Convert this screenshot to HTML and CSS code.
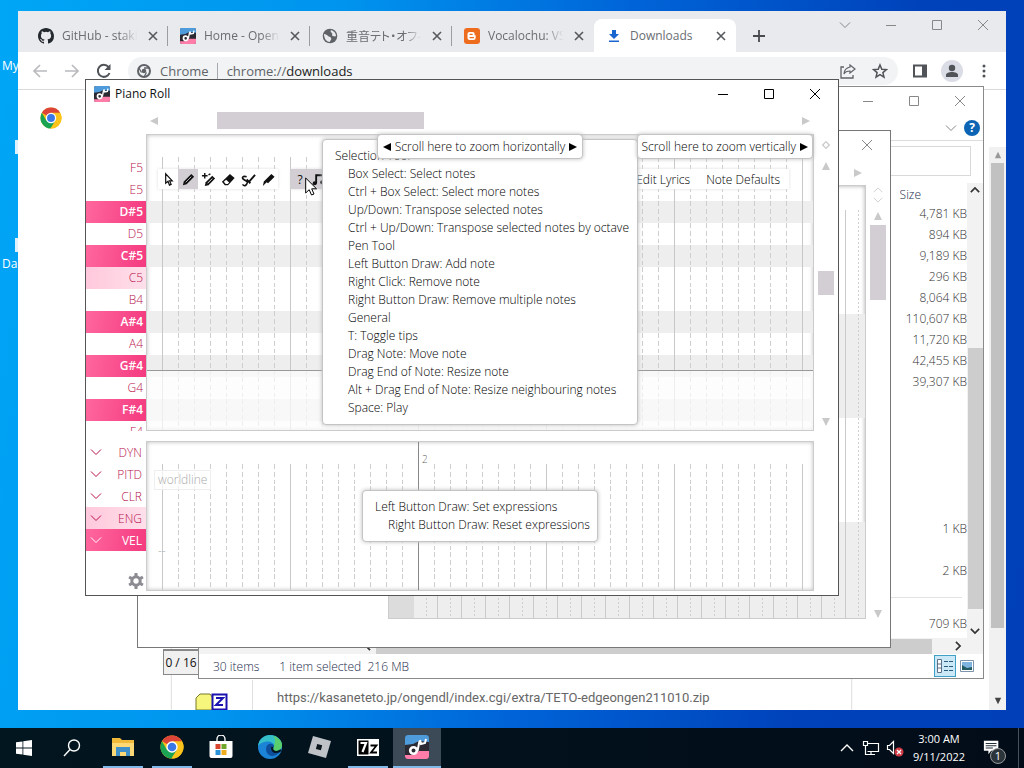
FILE: index.html
```html
<!DOCTYPE html>
<html lang="en">
<head>
    <meta charset="UTF-8">
    <meta name="viewport" content="width=device-width, initial-scale=1">
    <title>Desktop</title>
    <link rel="stylesheet" href="styles.css">
</head>
<body>
    <!-- Shared icons -->
    <svg class="sprite" aria-hidden="true">
        <symbol id="i-min" viewBox="0 0 12 12"><path d="M1 6.5h10" fill="none" stroke="currentColor"/></symbol>
        <symbol id="i-max" viewBox="0 0 12 12"><path d="M1.5 1.5h9v9h-9z" fill="none" stroke="currentColor"/></symbol>
        <symbol id="i-close" viewBox="0 0 12 12"><path d="M1 1l10 10M11 1L1 11" fill="none" stroke="currentColor"/></symbol>
        <symbol id="i-x" viewBox="0 0 12 12"><path d="M2 2l8 8M10 2l-8 8" fill="none" stroke="currentColor" stroke-width="1.6"/></symbol>
        <symbol id="i-down" viewBox="0 0 12 12"><path d="M1 3.5l5 5 5-5" fill="none" stroke="currentColor"/></symbol>
        <symbol id="i-up" viewBox="0 0 12 12"><path d="M1 8.5l5-5 5 5" fill="none" stroke="currentColor"/></symbol>
        <symbol id="i-tri" viewBox="0 0 10 10"><path d="M1 9h8L5 1z" fill="currentColor"/></symbol>
        <symbol id="i-utau" viewBox="0 0 24 24">
            <rect width="24" height="24" rx="3" fill="#2b2a33"/>
            <path d="M3 0h18a3 3 0 0 1 3 3v4L14 6l-6 3-8 1V3a3 3 0 0 1 3-3z" fill="#4e9bdb"/>
            <path d="M0 20l8 0 6-4 10 0v5a3 3 0 0 1-3 3H3a3 3 0 0 1-3-3z" fill="#ff7da8"/>
            <circle cx="8.500" cy="15.500" r="3.300" fill="none" stroke="#fff" stroke-width="2.600"/>
            <path d="M12.500 16l2-10M15 5l1 4 4-1 1-4" fill="none" stroke="#fff" stroke-width="2"/>
        </symbol>
        <symbol id="i-chrome" viewBox="0 0 24 24">
            <circle cx="12" cy="12" r="11.500" fill="#fbc116"/>
            <path d="M12 12L2 6.300A11.500 11.500 0 0 1 22 6.300z" fill="#db4437"/>
            <path d="M12 12L7 14.900 2 6.300a11.500 11.500 0 0 0 9.400 17.200L17 14.900z" fill="#1ba354"/>
            <path d="M12 6.300h10a11.500 11.500 0 0 1-10.500 17.200l5.500-8.700z" fill="#fcc31b"/>
            <circle cx="12" cy="12" r="5.700" fill="#fff"/>
            <circle cx="12" cy="12" r="4.300" fill="#3b78e7"/>
        </symbol>
    </svg>

    <main class="desktop">
        <div class="shortcut shortcut-my">My</div>
        <div class="shortcut shortcut-da">Da</div>

        <!-- Chrome -->
        <section class="window chrome">
            <div class="tabstrip">
                <div class="tab">
                    <svg class="favicon" viewBox="0 0 16 16"><path fill="#24292f" d="M8 0C3.580 0 0 3.580 0 8c0 3.540 2.290 6.530 5.470 7.590.4.070.55-.17.55-.38 0-.19-.01-.82-.01-1.490-2.010.37-2.530-.49-2.690-.94-.09-.23-.48-.94-.82-1.130-.28-.15-.68-.52-.01-.53.63-.01 1.080.58 1.230.82.72 1.210 1.870.87 2.330.66.07-.52.28-.87.51-1.070-1.780-.2-3.640-.89-3.640-3.950 0-.87.31-1.590.82-2.150-.08-.2-.36-1.020.08-2.120 0 0 .67-.21 2.200.82a7.600 7.600 0 0 1 4 0c1.530-1.040 2.200-.82 2.200-.82.44 1.100.16 1.920.08 2.120.51.56.82 1.270.82 2.150 0 3.070-1.870 3.750-3.650 3.950.29.25.54.73.54 1.480 0 1.070-.01 1.930-.01 2.200 0 .21.15.46.55.38A8.010 8.010 0 0 0 16 8c0-4.420-3.580-8-8-8z"/></svg>
                    <span class="tab-title">GitHub - staki</span>
                    <button class="tab-close" aria-label="Close tab"><svg><use href="#i-x"/></svg></button>
                </div>
                <div class="tab">
                    <svg class="favicon"><use href="#i-utau"/></svg>
                    <span class="tab-title">Home - OpenU</span>
                    <button class="tab-close" aria-label="Close tab"><svg><use href="#i-x"/></svg></button>
                </div>
                <div class="tab">
                    <svg class="favicon" viewBox="0 0 16 16"><circle cx="8" cy="8" r="7.300" fill="#5f6368"/><path d="M2 6c2 0 3 1 4 2s2 0 3 2-1 2-1 4c-3 0-6-3-6-8zM9 2c-1 2 0 2 1 3s-1 2 1 3 3 0 3 0c0-3-2-5-5-6z" fill="#e8eaed"/></svg>
                    <span class="tab-title">重音テト・オフィ</span>
                    <button class="tab-close" aria-label="Close tab"><svg><use href="#i-x"/></svg></button>
                </div>
                <div class="tab">
                    <svg class="favicon" viewBox="0 0 16 16"><rect width="16" height="16" rx="3" fill="#ee6c1d"/><path d="M5.500 4h3a2 2 0 0 1 2 2.300c0 .7.400 1 1.200 1v2.400a2.300 2.300 0 0 1-2.300 2.300H5.500A2 2 0 0 1 3.500 10V6a2 2 0 0 1 2-2z" fill="#fff"/><path d="M6 6.300h2.200M6 9.700h3.500" stroke="#ee6c1d" stroke-width="1.200" stroke-linecap="round"/></svg>
                    <span class="tab-title">Vocalochu: VS</span>
                    <button class="tab-close" aria-label="Close tab"><svg><use href="#i-x"/></svg></button>
                </div>
                <div class="tab tab-active">
                    <svg class="favicon" viewBox="0 0 16 16"><path d="M6 2h4v4h3l-5 5-5-5h3zM3 12.500h10V14H3z" fill="#1a66d0"/></svg>
                    <span class="tab-title">Downloads</span>
                    <button class="tab-close" aria-label="Close tab"><svg><use href="#i-x"/></svg></button>
                </div>
                <button class="new-tab" aria-label="New tab"><svg viewBox="0 0 12 12"><path d="M6 0v12M0 6h12" stroke="#474a4e" stroke-width="1.800"/></svg></button>
                <div class="caption caption-chrome">
                    <button aria-label="Search tabs"><svg><use href="#i-down"/></svg></button>
                    <button aria-label="Minimize"><svg><use href="#i-min"/></svg></button>
                    <button aria-label="Maximize"><svg><use href="#i-max"/></svg></button>
                    <button aria-label="Close"><svg><use href="#i-close"/></svg></button>
                </div>
            </div>
            <div class="toolbar">
                <button class="nav-btn" aria-label="Back"><svg viewBox="0 0 16 16"><path d="M15 8H2M8 2L2 8l6 6" fill="none" stroke="#b9bbbe" stroke-width="1.700"/></svg></button>
                <button class="nav-btn" aria-label="Forward"><svg viewBox="0 0 16 16"><path d="M1 8h13M8 2l6 6-6 6" fill="none" stroke="#b9bbbe" stroke-width="1.700"/></svg></button>
                <button class="nav-btn" aria-label="Reload"><svg viewBox="0 0 16 16"><path d="M13.500 10A6 6 0 1 1 12.500 4" fill="none" stroke="#505357" stroke-width="2"/><path d="M14.500 1v6h-6z" fill="#505357"/></svg></button>
                <div class="omnibox">
                    <svg class="omni-logo" viewBox="0 0 14 14"><circle cx="7" cy="7" r="6" fill="none" stroke="#5f6368" stroke-width="2"/><circle cx="7" cy="7" r="2.300" fill="#5f6368"/><path d="M7 4h6M4.500 8.500L2 4M9.500 8.500L7 13" stroke="#5f6368" stroke-width="1.300"/></svg>
                    <span class="omni-chip">Chrome</span>
                    <label class="omni-scheme" for="url">chrome://</label><input id="url" class="omni-input" type="text" value="downloads">
                    <svg class="omni-icon" viewBox="0 0 16 16"><path d="M4 4H1v11h12v-3" fill="none" stroke="#5f6368" stroke-width="1.300"/><path d="M10 2l5 4-5 4V8C7 8 5 9 4 11c0-4 2-6 6-7z" fill="none" stroke="#5f6368" stroke-width="1.200"/></svg>
                    <svg class="omni-icon" viewBox="0 0 16 16"><path d="M8 2l1.800 4.200 4.600.4-3.500 3 1.100 4.500L8 11.700l-4 2.400 1.100-4.500-3.500-3 4.600-.4z" fill="none" stroke="#505357" stroke-width="1.500"/></svg>
                </div>
                <button class="tool-btn" aria-label="Side panel"><svg viewBox="0 0 16 16"><path d="M2 2.500h12v11H2z" fill="none" stroke="#505357" stroke-width="2"/><path d="M10 2h4v12h-4z" fill="#505357"/></svg></button>
                <button class="tool-btn avatar" aria-label="Profile"><svg viewBox="0 0 16 16"><circle cx="8" cy="5" r="3.200" fill="#505357"/><path d="M2 14v-2c0-4 12-4 12 0v2z" fill="#505357"/></svg></button>
                <button class="tool-btn" aria-label="Menu"><svg viewBox="0 0 16 16"><g fill="#505357"><circle cx="8" cy="3" r="1.500"/><circle cx="8" cy="8" r="1.500"/><circle cx="8" cy="13" r="1.500"/></g></svg></button>
            </div>
            <div class="page-head"><svg class="page-logo"><use href="#i-chrome"/></svg></div>
            <div class="page-body">
                <div class="page-content">
                    <div class="download-card">
                        <div class="download-icon">
                            <svg viewBox="0 0 34 18"><path d="M1 18V6l4-4h10l3 4v12z" fill="#f6f67c" stroke="#77772a"/><rect x="17.500" y="2.500" width="14" height="15" fill="#fff" stroke="#1a12b0" stroke-width="2"/><path d="M21 6h7l-7 7h7" fill="none" stroke="#1a12b0" stroke-width="2"/></svg>
                        </div>
                        <a class="download-url" href="#">https://kasaneteto.jp/ongendl/index.cgi/extra/TETO-edgeongen211010.zip</a>
                    </div>
                </div>
                <div class="page-scroll">
                    <svg class="tri"><use href="#i-tri"/></svg>
                    <div class="page-thumb"></div>
                    <svg class="tri flip dark"><use href="#i-tri"/></svg>
                </div>
            </div>
        </section>

        <div class="ratio">0 / 16</div>

        <!-- File Explorer -->
        <section class="window explorer">
            <div class="caption">
                <button aria-label="Minimize"><svg><use href="#i-min"/></svg></button>
                <button aria-label="Maximize"><svg><use href="#i-max"/></svg></button>
                <button aria-label="Close"><svg><use href="#i-close"/></svg></button>
            </div>
            <div class="ribbon">
                <button aria-label="Expand ribbon"><svg><use href="#i-down"/></svg></button>
                <button class="help" aria-label="Help">?</button>
            </div>
            <div class="address"><input type="text" aria-label="Search"></div>
            <div class="files">
                <table>
                    <thead><tr><th>Size</th></tr></thead>
                    <tbody>
                        <tr><td>4,781 KB</td></tr>
                        <tr><td>894 KB</td></tr>
                        <tr><td>9,189 KB</td></tr>
                        <tr><td>296 KB</td></tr>
                        <tr><td>8,064 KB</td></tr>
                        <tr><td>110,607 KB</td></tr>
                        <tr><td>11,720 KB</td></tr>
                        <tr><td>42,455 KB</td></tr>
                        <tr><td>39,307 KB</td></tr>
                        <tr><td></td></tr>
                        <tr><td></td></tr>
                        <tr><td></td></tr>
                        <tr><td></td></tr>
                        <tr><td></td></tr>
                        <tr><td></td></tr>
                        <tr><td>1 KB</td></tr>
                        <tr><td></td></tr>
                        <tr><td>2 KB</td></tr>
                        <tr class="group"><td><hr></td></tr>
                        <tr><td>709 KB</td></tr>
                    </tbody>
                </table>
                <div class="files-scroll">
                    <svg><use href="#i-up"/></svg>
                    <div class="files-thumb"></div>
                    <svg><use href="#i-down"/></svg>
                </div>
            </div>
            <div class="files-hscroll"><svg><use href="#i-up"/></svg><div class="files-hthumb"></div><svg class="right"><use href="#i-up"/></svg></div>
            <div class="status">
                <span>30 items</span>
                <span class="status-selected">1 item selected&nbsp; 216 MB</span>
                <button class="view view-active" aria-label="Details"><svg viewBox="0 0 18 18"><path d="M1.500 2.500h4v13h-4zM1.500 7h4M1.500 11h4" fill="#fff" stroke="#5a7088"/><path d="M8 4.500h4M8 9.500h4M8 13.500h4M13 4.500h4M13 9.500h4M13 13.500h4" stroke="#2b5c7c"/></svg></button>
                <button class="view" aria-label="Thumbnails"><svg viewBox="0 0 18 18"><path d="M2.500 3.500h13v11h-13z" fill="#fff" stroke="#7d93ab"/><path d="M4 5h10v8H4z" fill="#7fb4e0"/><path d="M4 8l5 3 5-1v3H4z" fill="#255c64"/></svg></button>
            </div>
        </section>

        <!-- OpenUtau arrangement window -->
        <section class="window tracks">
            <div class="caption"><button aria-label="Close"><svg><use href="#i-close"/></svg></button></div>
            <div class="tracks-top"><svg class="tri east"><use href="#i-tri"/></svg></div>
            <div class="tracks-body">
                <div class="tracks-canvas">
                    <div class="track-row"></div>
                    <div class="track-row shaded"></div>
                    <div class="track-row"></div>
                    <div class="track-row shaded"></div>
                    <svg class="track-lines">
                        <defs><pattern id="beats" x="24" width="24" height="4" patternUnits="userSpaceOnUse"><path d="M.5 0v4" stroke="#cacaca"/><path d="M13.500 0v2" stroke="#cfcfcf"/></pattern></defs>
                        <rect width="100%" height="100%" fill="url(#beats)"/>
                        <rect width="25" height="100%" fill="#dcdcdc"/>
                    </svg>
                </div>
                <div class="vscroll">
                    <svg class="mini"><use href="#i-up"/></svg>
                    <svg class="mini"><use href="#i-down"/></svg>
                    <svg class="tri"><use href="#i-tri"/></svg>
                    <div class="tracks-thumb"></div>
                    <svg class="tri flip last"><use href="#i-tri"/></svg>
                </div>
            </div>
        </section>

        <!-- Piano Roll -->
        <section class="window piano">
            <header class="piano-title">
                <svg class="favicon"><use href="#i-utau"/></svg>
                <h1>Piano Roll</h1>
                <div class="caption">
                    <button aria-label="Minimize"><svg><use href="#i-min"/></svg></button>
                    <button aria-label="Maximize"><svg><use href="#i-max"/></svg></button>
                    <button aria-label="Close"><svg><use href="#i-close"/></svg></button>
                </div>
            </header>
            <div class="hscroll">
                <svg class="tri west"><use href="#i-tri"/></svg>
                <div class="hscroll-track"><div class="hscroll-thumb"></div></div>
                <svg class="tri east"><use href="#i-tri"/></svg>
            </div>

            <div class="notes">
                <div class="keys">
                    <div class="key">F5</div>
                    <div class="key">E5</div>
                    <div class="key black">D#5</div>
                    <div class="key">D5</div>
                    <div class="key black">C#5</div>
                    <div class="key center">C5</div>
                    <div class="key">B4</div>
                    <div class="key black">A#4</div>
                    <div class="key">A4</div>
                    <div class="key black">G#4</div>
                    <div class="key">G4</div>
                    <div class="key black">F#4</div>
                    <div class="key">F4</div>
                </div>
                <div class="canvas">
                    <div class="lanes">
                        <div></div>
                        <div></div>
                        <div class="shaded"></div>
                        <div></div>
                        <div class="shaded"></div>
                        <div></div>
                        <div></div>
                        <div class="shaded"></div>
                        <div></div>
                        <div class="shaded"></div>
                        <div></div>
                        <div class="shaded"></div>
                        <div></div>
                    </div>
                    <svg class="grid">
                        <defs>
                            <pattern id="bars" x="15" width="128" height="22" patternUnits="userSpaceOnUse">
                                <path d="M.5 0v22" stroke="#c8c8c8"/>
                                <path d="M16.500 0v22M32.500 0v22M48.500 0v22M64.500 0v22M80.500 0v22M96.500 0v22M112.500 0v22" stroke="#cecece" stroke-dasharray="5 3 5 3 4 2"/>
                            </pattern>
                        </defs>
                        <rect width="100%" height="100%" fill="url(#bars)"/>
                    </svg>
                    <div class="phonemes"></div>

                    <div class="tools">
                        <button aria-label="Select"><svg viewBox="0 0 16 16"><path d="M5 2v10l2.500-2L9 14l1.800-.8L9.200 9.500H12z" fill="none" stroke="#111" stroke-width="1.300"/></svg></button>
                        <button class="on" aria-label="Pen"><svg viewBox="0 0 16 16"><path d="M2 14l1-4 8-8 3 3-8 8z" fill="#111"/><path d="M5 11l6-6" stroke="#bbb"/></svg></button>
                        <button aria-label="Pen plus"><svg viewBox="0 0 16 16"><path d="M4 15l1-4 7-7 3 3-7 7z" fill="#111"/><path d="M7 12l5-5" stroke="#eee"/><path d="M4 1v6M1 4h6M8 3l2-1" stroke="#111" stroke-width="1.500"/></svg></button>
                        <button aria-label="Eraser"><svg viewBox="0 0 16 16"><path d="M9.500 2l5 4.500-7 7.500H4l-3-3.500z" fill="#111"/><path d="M5.500 8.200l3.200 3-1.600 1.600H5L3 10.500z" fill="#fff"/></svg></button>
                        <button aria-label="Draw pitch"><svg viewBox="0 0 16 16"><path d="M6 5c-4-1-6 1-3 3s5 2 3 5-4 1-4 0" fill="none" stroke="#111" stroke-width="1.700"/><path d="M8 11l7-8M6 8l4 4" stroke="#111" stroke-width="2"/></svg></button>
                        <button aria-label="Knife"><svg viewBox="0 0 16 16"><path d="M2 15l1-5 8-8 3.500 3-7 7-1.500-1z" fill="#111"/></svg></button>
                    </div>
                    <div class="tools tools-main">
                        <button class="on" aria-label="Toggle tips"><b>?</b></button>
                        <button class="on" aria-label="Play tone"><svg viewBox="0 0 16 16"><path d="M5.500 12V3.500h8V11" fill="none" stroke="#111" stroke-width="2"/><circle cx="4" cy="12" r="2.200" fill="#111"/><circle cx="12" cy="11" r="2.200" fill="#111"/></svg></button>
                        <span class="menu-text">
                            <button class="menu-btn">Edit Lyrics</button>
                            <button class="menu-btn">Note Defaults</button>
                        </span>
                    </div>

                    <div class="tip tip-help">
                        <p>Selection Tool</p>
                        <p>Box Select: Select notes</p>
                        <p>Ctrl + Box Select: Select more notes</p>
                        <p>Up/Down: Transpose selected notes</p>
                        <p>Ctrl + Up/Down: Transpose selected notes by octave</p>
                        <p>Pen Tool</p>
                        <p>Left Button Draw: Add note</p>
                        <p>Right Click: Remove note</p>
                        <p>Right Button Draw: Remove multiple notes</p>
                        <p>General</p>
                        <p>T: Toggle tips</p>
                        <p>Drag Note: Move note</p>
                        <p>Drag End of Note: Resize note</p>
                        <p>Alt + Drag End of Note: Resize neighbouring notes</p>
                        <p>Space: Play</p>
                    </div>
                    <div class="tip tip-zoom tip-zoom-h"><svg class="west"><use href="#i-tri"/></svg>Scroll here to zoom horizontally<svg class="east"><use href="#i-tri"/></svg></div>
                    <div class="tip tip-zoom tip-zoom-v">Scroll here to zoom vertically<svg class="east"><use href="#i-tri"/></svg></div>
                </div>
                <div class="vscroll">
                    <svg class="mini" viewBox="0 0 12 12"><path d="M6 2l4 4-4 4-4-4z" fill="none" stroke="currentColor" stroke-width="1.500"/></svg>
                    <svg class="tri"><use href="#i-tri"/></svg>
                    <div class="notes-thumb"></div>
                    <svg class="tri flip last"><use href="#i-tri"/></svg>
                </div>
            </div>

            <div class="expressions">
                <div class="keys">
                    <button class="exp"><svg><use href="#i-down"/></svg>DYN</button>
                    <button class="exp"><svg><use href="#i-down"/></svg>PITD</button>
                    <button class="exp"><svg><use href="#i-down"/></svg>CLR</button>
                    <button class="exp exp-second"><svg><use href="#i-down"/></svg>ENG</button>
                    <button class="exp exp-active"><svg><use href="#i-down"/></svg>VEL</button>
                    <button class="gear" aria-label="Expression settings"><svg viewBox="0 0 16 16"><circle cx="8" cy="8" r="4.200" fill="none" stroke="#8b8b92" stroke-width="3"/><path d="M8 0v3M8 13v3M1.100 4l2.600 1.500M12.300 10.500l2.600 1.500M1.100 12l2.600-1.500M12.300 5.500L14.900 4" stroke="#8b8b92" stroke-width="3"/></svg></button>
                </div>
                <div class="canvas">
                    <svg class="grid"><rect width="100%" height="100%" fill="url(#bars)"/></svg>
                    <div class="bar-line">2</div>
                    <span class="renderer">worldline</span>
                    <span class="dashes">--</span>
                    <div class="tip tip-exp">
                        <p>Left Button Draw: Set expressions</p>
                        <p>Right Button Draw: Reset expressions</p>
                    </div>
                </div>
                <div class="vscroll"></div>
            </div>
        </section>

        <svg class="cursor" viewBox="0 0 12 19"><path d="M.7 1v15l3.500-3.300L6.500 18l2.500-1-2.300-5.200h4.800z" fill="#fff" stroke="#000"/></svg>
    </main>

    <!-- Taskbar -->
    <nav class="taskbar">
        <button class="task" aria-label="Start"><svg viewBox="0 0 24 24"><path d="M4 6.300l6.500-.9v6.200H4zM11.300 5.300L20 4v7.600h-8.700zM4 12.400h6.500v6.200L4 17.700zM11.300 12.400H20V20l-8.700-1.300z" fill="#fff"/></svg></button>
        <button class="task" aria-label="Search"><svg viewBox="0 0 24 24"><circle cx="14" cy="9.500" r="5.500" fill="none" stroke="#fff" stroke-width="1.400"/><path d="M10 13.500L4 20" stroke="#fff" stroke-width="1.400"/></svg></button>
        <button class="task app running" aria-label="File Explorer"><svg viewBox="0 0 24 24"><path d="M1 3h8l2 2h12v16H1z" fill="#f0b93a"/><path d="M1 8h22v13H1z" fill="#fdd975"/><path d="M5 21v-9h14v9h-4v-4H9v4z" fill="#3f8fc9"/></svg></button>
        <button class="task app running" aria-label="Chrome"><svg><use href="#i-chrome"/></svg></button>
        <button class="task app" aria-label="Store"><svg viewBox="0 0 24 24"><path d="M8 7V4a4 4 0 0 1 8 0v3" fill="none" stroke="#fff" stroke-width="1.300"/><path d="M.5 6h23v15a2 2 0 0 1-2 2h-19a2 2 0 0 1-2-2z" fill="#fff"/><path d="M6.500 9h5v5h-5z" fill="#d8452e"/><path d="M12.500 9h5v5h-5z" fill="#70a62c"/><path d="M6.500 15h5v5h-5z" fill="#2a93d8"/><path d="M12.500 15h5v5h-5z" fill="#efac1f"/></svg></button>
        <button class="task app" aria-label="Edge"><svg viewBox="0 0 24 24"><circle cx="12" cy="12" r="12" fill="#1b84d6"/><path d="M0 11C1 4 6 0 12 0c7 0 12 5 12 10 0 4-3 6-6 6-2 0-3-1-3-2s1-1 1-3c0-3-3-4.500-6-4.500C5 6.500 1 9 0 11z" fill="#35bfc8"/><path d="M15 1c5 1 9 5 9 9 0 4-3 6-6 6-2 0-3-1-3-2s1-1 1-3c0-1 3-6-1-10z" fill="#58cf6c"/><path d="M8 14c0-4 3-6 6-5 1 .5 2 1 2 2s-1 2-1 3 1 2 3 2 3-.5 5-1.500C21 19 17 21 14 21s-6-3-6-7z" fill="#0d4f9c"/><path d="M14 12c0 3 1 5 4 5 2 0 4-1 5-2" fill="none" stroke="#031621" stroke-width="2"/></svg></button>
        <button class="task app" aria-label="Roblox"><svg viewBox="0 0 24 24"><path d="M6 1l18 5-5 17-18-5z" fill="#bfc3c8"/><path d="M10.200 9l5 1.300-1.300 5-5-1.300z" fill="#0a151c"/></svg></button>
        <button class="task app running" aria-label="7-Zip"><svg viewBox="0 0 24 24"><path d="M1 4h22v17H1z" fill="#fff"/><path d="M2.500 5.500h10v14h-10z" fill="#000"/><path d="M4.500 8h5.500l-3.500 9" fill="none" stroke="#fff" stroke-width="2.200"/><path d="M14.500 10.500h6l-5.500 7h6" fill="none" stroke="#000" stroke-width="1.800"/></svg></button>
        <button class="task app running current" aria-label="OpenUtau"><svg><use href="#i-utau"/></svg></button>
        <div class="tray">
            <button aria-label="Show hidden icons"><svg viewBox="0 0 18 18"><path d="M3 12l6-6 6 6" fill="none" stroke="#fff" stroke-width="1.400"/></svg></button>
            <button aria-label="Network"><svg viewBox="0 0 18 18"><path d="M5.500 4.500h11v8h-11M9 12.500v3M6 15.500h7M1.500 2.500h4v4h-4zM3.500 6.500v9H6" fill="none" stroke="#fff" stroke-width="1.200"/></svg></button>
            <button aria-label="Volume"><svg viewBox="0 0 18 18"><path d="M1.500 6.500h2l4-4v12l-4-4h-2z" fill="none" stroke="#fff" stroke-width="1.200"/><circle cx="13" cy="13" r="4.500" fill="#d23b46"/><path d="M11 11l4 4M15 11l-4 4" stroke="#fff" stroke-width="1.300"/></svg></button>
            <button class="clock"><span>3:00 AM</span><span>9/11/2022</span></button>
            <button class="notify" aria-label="Notifications"><svg viewBox="0 0 20 18"><path d="M1 1h16v11H9l-3 4v-4H1z" fill="#fff"/><path d="M3 4h12M3 6.500h12M3 9h8" stroke="#0a1722"/></svg><span class="badge">1</span></button>
        </div>
    </nav>
</body>
</html>
```
FILE: styles.css
```css
* {
    margin: 0;
    padding: 0;
    box-sizing: border-box;
}

body {
    height: 100vh;
    display: flex;
    flex-direction: column;
    overflow: hidden;
    font-family: "Open Sans", "Noto Sans CJK JP", sans-serif;
    font-size: 12px;
    color: #111;
}

button {
    border: none;
    background: none;
    font: inherit;
    color: inherit;
    display: flex;
    align-items: center;
    justify-content: center;
}

svg {
    display: block;
    flex: none;
}

.sprite {
    position: absolute;
    width: 0;
    height: 0;
}

.desktop {
    flex: 1;
    position: relative;
    overflow: hidden;
    background: linear-gradient(100deg, #00a6f6 0%, #0094ee 30%, #0064d8 55%, #0042ba 80%, #003fb8 100%);
}

.shortcut {
    position: absolute;
    left: 2px;
    color: #fff;
    line-height: 16px;
}

.shortcut-my {
    top: 58px;
}

.shortcut-da {
    top: 256px;
}

.shortcut::after {
    content: "";
    position: absolute;
    left: 13px;
    top: 82px;
    width: 3px;
    height: 14px;
    background: #dff1fd;
}

.shortcut-da::after {
    top: -18px;
}

.window {
    position: absolute;
    display: flex;
    flex-direction: column;
    background: #fff;
    overflow: hidden;
}

.caption {
    display: flex;
    justify-content: flex-end;
    flex: none;
    color: #888;
}

.caption button {
    width: 46px;
    height: 28px;
}

.caption svg {
    width: 12px;
    height: 12px;
}

.tri {
    width: 10px;
    height: 10px;
    color: #c9c9c9;
}

.flip {
    transform: rotate(180deg);
}

.east {
    transform: rotate(90deg);
}

.west {
    transform: rotate(-90deg);
}

.last {
    margin-top: auto;
}

.favicon {
    width: 16px;
    height: 16px;
}

/* Chrome */
.chrome {
    left: 18px;
    top: 11px;
    right: 18px;
    bottom: 18px;
}

.tabstrip {
    display: flex;
    align-items: flex-end;
    height: 41px;
    flex: none;
    padding-left: 8px;
    background: #e8eaed;
}

.tab {
    display: flex;
    align-items: center;
    gap: 8px;
    width: 142px;
    height: 33px;
    padding: 0 9px 0 12px;
    color: #6a6d72;
    position: relative;
}

.tab:not(.tab-active):not(:nth-child(4))::after {
    content: "";
    position: absolute;
    right: 0;
    top: 7px;
    width: 1px;
    height: 20px;
    background: #9a9da1;
}

.tab-title {
    flex: 1;
    min-width: 0;
    overflow: hidden;
    white-space: nowrap;
    font-feature-settings: "palt";
    mask-image: linear-gradient(90deg, #000 75%, transparent 98%);
}

.tab-active {
    background: #fff;
    border-radius: 8px 8px 0 0;
}

.tab-active .tab-title {
    mask-image: none;
}

.tab-close,
.tab-close svg {
    width: 12px;
    height: 12px;
    color: #55585c;
}

.new-tab {
    width: 46px;
    height: 33px;
}

.new-tab svg {
    width: 12px;
    height: 12px;
}

.caption-chrome {
    align-self: flex-start;
    margin-left: auto;
}

.toolbar {
    display: flex;
    align-items: center;
    height: 38px;
    flex: none;
    padding: 0 6px;
    border-bottom: 1px solid #d8dadc;
}

.nav-btn {
    width: 32px;
    height: 32px;
}

.nav-btn svg,
.tool-btn svg {
    width: 16px;
    height: 16px;
}

.omnibox {
    flex: 1;
    display: flex;
    align-items: center;
    height: 28px;
    margin: 0 6px 0 8px;
    padding: 0 10px 0 9px;
    border-radius: 14px;
    background: #f1f3f4;
    font-size: 13px;
    color: #5f6368;
}

.omni-logo {
    width: 14px;
    height: 14px;
    margin-right: 9px;
}

.omni-chip {
    padding-right: 8px;
    margin-right: 9px;
    border-right: 1px solid #a5a8ac;
    line-height: 16px;
}

.omni-input {
    flex: 1;
    min-width: 0;
    border: none;
    background: none;
    font: inherit;
    color: #222;
}

.omni-icon {
    width: 16px;
    height: 16px;
    margin-left: 16px;
}

.tool-btn {
    width: 32px;
    height: 22px;
}

.avatar {
    width: 22px;
    margin: 0 5px;
    border-radius: 11px;
    background: #dadce6;
}

.page-head {
    height: 57px;
    flex: none;
    padding: 17px 22px;
}

.page-logo {
    width: 22px;
    height: 22px;
}

.page-body {
    flex: 1;
    display: flex;
}

.page-content {
    flex: 1;
    display: flex;
    padding: 0 138px 0 154px;
}

.download-card {
    flex: 1;
    display: flex;
    align-items: flex-end;
    box-shadow: 0 0 2px #aaa;
}

.download-icon {
    width: 81px;
    height: 30px;
    padding: 12px 0 0 23px;
    border-right: 1px solid #e0e0e0;
}

.download-icon svg {
    width: 34px;
    height: 18px;
}

.download-url {
    padding-left: 24px;
    font: 13px/24px Roboto, sans-serif;
    color: #666;
    text-decoration: none;
}

.page-scroll {
    display: flex;
    flex-direction: column;
    align-items: center;
    width: 17px;
    padding: 4px 0 5px;
    background: #f1f1f1;
}

.page-scroll .tri {
    width: 8px;
    height: 8px;
    color: #999;
}

.page-scroll .dark {
    color: #444;
}

.page-thumb {
    width: 13px;
    flex: none;
    height: 84%;
    margin: 4px 0 auto;
    background: #c1c1c1;
}

/* Batch counter left over on the browser */
.ratio {
    position: absolute;
    left: 163px;
    top: 649px;
    width: 36px;
    height: 26px;
    border: 1px solid #888;
    border-top-width: 2px;
    background: #f0f0f0;
    line-height: 24px;
    text-align: center;
    white-space: nowrap;
}

/* File Explorer */
.explorer {
    left: 198px;
    top: 86px;
    width: 786px;
    height: 593px;
    border: 1px solid #8a8a8a;
    font-weight: 300;
    color: #333;
}

.ribbon {
    display: flex;
    justify-content: flex-end;
    align-items: center;
    gap: 7px;
    height: 26px;
    flex: none;
    padding-right: 3px;
    border-bottom: 1px solid #ddd;
}

.ribbon svg {
    width: 12px;
    height: 12px;
    color: #888;
}

.help {
    width: 16px;
    height: 16px;
    border-radius: 8px;
    background: #0c64b4;
    color: #fff;
    font-weight: bold;
}

.address {
    height: 42px;
    flex: none;
    padding: 5px 12px 7px 0;
}

.address input {
    display: block;
    width: 100%;
    height: 30px;
    border: 1px solid #d9d9d9;
}

.files {
    flex: 1;
    min-height: 0;
    display: flex;
    overflow: hidden;
}

.files table {
    flex: 1;
    border-collapse: collapse;
    align-self: flex-start;
}

.files th {
    height: 20px;
    padding: 3px 46px 0 0;
    text-align: right;
    font-weight: 300;
    line-height: 16px;
    color: #222c48;
}

.files td {
    height: 21px;
    text-align: right;
    line-height: 16px;
}

.files .group td {
    height: 32px;
    padding: 0 5px 0 0;
}

.files hr {
    border: none;
    border-top: 1px solid #e2e2e2;
}

.files-scroll {
    display: flex;
    flex-direction: column;
    align-items: center;
    width: 16px;
    padding: 2px 0;
    background: #f2f2f2;
    color: #333;
}

.files-scroll svg,
.files-hscroll svg {
    width: 10px;
    height: 10px;
    stroke-width: 2px;
}

.files-thumb {
    width: 15px;
    height: 261px;
    margin-top: auto;
    margin-bottom: 17px;
    background: #cdcdcd;
}

.files-hscroll {
    display: flex;
    align-items: center;
    height: 16px;
    flex: none;
    padding: 0 20px 0 164px;
    background: #f2f2f2;
    color: #333;
}

.files-hscroll svg {
    transform: rotate(-90deg);
}

.files-hscroll .right {
    transform: rotate(90deg);
}

.files-hthumb {
    flex: 1;
    height: 15px;
    margin: 0 21px 0 3px;
    background: #cdcdcd;
}

.status {
    display: flex;
    align-items: center;
    height: 24px;
    flex: none;
    padding: 0 5px 0 14px;
    color: #1c2a4a;
}

.status-selected {
    margin: 0 auto 0 20px;
}

.view {
    width: 22px;
    height: 22px;
    border: 1px solid transparent;
}

.view-active {
    border-color: #3f9fc4;
    background: #cbe8f6;
}

.view svg {
    width: 18px;
    height: 18px;
}

/* OpenUtau main window */
.tracks {
    left: 137px;
    top: 130px;
    width: 754px;
    height: 518px;
    border: 1px solid #777;
}

.tracks-top {
    display: flex;
    justify-content: flex-end;
    height: 26px;
    flex: none;
    padding: 9px 27px 0;
}

.tracks-body {
    flex: 1;
    min-height: 0;
    display: flex;
    padding: 0 0 28px 250px;
}

.tracks-canvas {
    flex: 1;
    position: relative;
    display: flex;
    flex-direction: column;
    padding-top: 24px;
    border: 1px solid #ccc;
    overflow: hidden;
    box-shadow: inset 0 0 4px #aaa;
}

.track-row {
    height: 104px;
    flex: none;
}

.shaded {
    background: #eee;
}

.track-lines {
    position: absolute;
    left: 0;
    top: 24px;
    width: 100%;
    height: 100%;
}

.vscroll {
    display: flex;
    flex-direction: column;
    align-items: center;
    width: 24px;
    flex: none;
    color: #c9c9c9;
}

.mini {
    width: 10px;
    height: 10px;
}

.tracks-thumb {
    width: 16px;
    height: 75px;
    margin-top: 4px;
    background: #d2ced4;
}

.tracks-body .tri {
    margin-top: 6px;
}

.tracks-body .last {
    margin-top: auto;
}

/* Piano Roll */
.piano {
    left: 85px;
    top: 79px;
    width: 754px;
    height: 517px;
    border: 1px solid #555;
}

.piano-title {
    display: flex;
    align-items: center;
    height: 27px;
    flex: none;
    padding-left: 8px;
}

.piano-title h1 {
    flex: 1;
    padding-left: 5px;
    font-size: 12px;
    font-weight: normal;
}

.piano-title .caption {
    color: #000;
}

.hscroll {
    display: flex;
    align-items: center;
    height: 27px;
    flex: none;
    padding: 0 27px 0 63px;
}

.hscroll-track {
    flex: 1;
    padding-left: 58px;
}

.hscroll-thumb {
    width: 207px;
    height: 17px;
    background: #d2ced4;
}

.notes,
.expressions {
    display: flex;
    font-weight: 300;
}

.notes {
    height: 297px;
    margin-bottom: 10px;
}

.expressions {
    height: 150px;
}

.keys {
    width: 60px;
    flex: none;
    overflow: hidden;
    color: #b8104e;
}

.notes .keys {
    padding-top: 23px;
}

.key {
    height: 22px;
    padding-right: 3px;
    line-height: 22px;
    text-align: right;
}

.black,
.exp-active {
    background: linear-gradient(100deg, #ff679d, #f43a80);
    color: #fff;
    font-weight: 600;
}

.exp-active {
    font-weight: 400;
}

.center,
.exp-second {
    background: linear-gradient(90deg, #ffc8dc, #ffe0ea);
}

.canvas {
    flex: 1;
    position: relative;
    border: 1px solid #ccc;
    box-shadow: inset 0 0 4px #bbb;
}

.lanes {
    height: 100%;
    padding-top: 22px;
    overflow: hidden;
}

.lanes div {
    height: 22px;
}

.grid {
    position: absolute;
    left: 0;
    top: 22px;
    width: 100%;
    height: calc(100% - 22px);
}

.phonemes {
    position: absolute;
    left: 0;
    right: 0;
    bottom: 0;
    height: 60px;
    border-top: 1px solid #999;
    background: rgba(252, 252, 252, 0.7);
}

.tools {
    position: absolute;
    left: 11px;
    top: 34px;
    display: flex;
    height: 20px;
    background: #fff;
    box-shadow: 0 0 3px #ddd;
}

.tools > button {
    width: 20px;
    height: 20px;
}

.tools svg {
    width: 15px;
    height: 15px;
}

.tools .on {
    background: #d2ced4;
}

.tools-main {
    left: 144px;
    right: 24px;
}

.tools-main > button {
    width: 18px;
}

.menu-text {
    display: flex;
    gap: 16px;
    margin-left: auto;
    padding-right: 9px;
    color: #000;
}

.tip {
    position: absolute;
    border: 1px solid #c4c4c4;
    border-radius: 4px;
    background: #fff;
    box-shadow: 0 0 4px #bbb;
    line-height: 18px;
    white-space: nowrap;
    color: #000;
}

.tip p + p {
    padding-left: 13px;
}

.tip-help {
    left: 175px;
    top: 4px;
    width: 316px;
    padding: 7px 12px;
}

.tip-zoom {
    top: -1px;
    display: flex;
    align-items: center;
    height: 25px;
}

.tip-zoom svg {
    width: 10px;
    height: 10px;
    margin: 0 3px;
}

.tip-zoom-h {
    left: 230px;
    width: 206px;
    justify-content: center;
}

.tip-zoom-v {
    right: 0;
    width: 176px;
    justify-content: flex-end;
}

.tip-exp {
    left: 215px;
    top: 48px;
    width: 236px;
    padding: 7px 12px;
}

.notes .mini {
    margin-top: 6px;
}

.notes .tri {
    margin-top: 11px;
}

.notes-thumb {
    width: 16px;
    height: 24px;
    margin-top: 100px;
    background: #d2ced4;
}

.notes .last {
    margin-top: auto;
    margin-bottom: 4px;
}

.exp {
    width: 100%;
    height: 22px;
    padding: 0 4px;
    justify-content: space-between;
}

.exp svg {
    width: 12px;
    height: 12px;
}

.gear {
    margin: 22px 2px 0 auto;
}

.gear svg {
    width: 16px;
    height: 16px;
}

.bar-line {
    position: absolute;
    left: 271px;
    top: 0;
    bottom: 0;
    padding: 8px 0 0 3px;
    border-left: 1px solid #888;
    font-size: 10px;
    line-height: 18px;
    color: #666;
}

.renderer {
    position: absolute;
    left: 7px;
    top: 28px;
    padding: 0 3px;
    border: 1px solid #eee;
    background: rgba(255, 255, 255, 0.7);
    color: #aaa;
    line-height: 18px;
}

.dashes {
    position: absolute;
    left: 11px;
    top: 100px;
    color: #aaa;
}

.cursor {
    position: absolute;
    left: 305px;
    top: 177px;
    width: 12px;
    height: 19px;
}

/* Taskbar */
.taskbar {
    display: flex;
    height: 40px;
    flex: none;
    background: linear-gradient(90deg, #021620, #020c18);
    color: #fff;
}

.task {
    width: 48px;
    height: 40px;
    flex: none;
}

.task svg {
    width: 24px;
    height: 24px;
}

.app {
    margin-right: 1px;
    border-bottom: 2px solid transparent;
}

.app:nth-child(3) {
    margin-left: 3px;
}

.running {
    background: linear-gradient(#83b9e8, #83b9e8) center bottom / 40px 2px no-repeat border-box;
}

.current {
    background: #3b4a56;
    border-bottom-color: #83b9e8;
}

.tray {
    display: flex;
    align-items: center;
    margin-left: auto;
    padding-right: 5px;
}

.tray > button {
    width: 24px;
    height: 40px;
}

.tray svg {
    width: 18px;
    height: 18px;
}

.tray .clock {
    flex-direction: column;
    width: 64px;
    font-size: 11px;
    line-height: 18px;
}

.tray .notify {
    position: relative;
    width: 48px;
    border-right: 1px solid #44505a;
    padding-right: 6px;
}

.badge {
    position: absolute;
    right: 12px;
    bottom: 4px;
    width: 16px;
    height: 16px;
    border: 1px solid #999;
    border-radius: 8px;
    background: #2b333b;
    font-size: 11px;
    line-height: 14px;
}
```
